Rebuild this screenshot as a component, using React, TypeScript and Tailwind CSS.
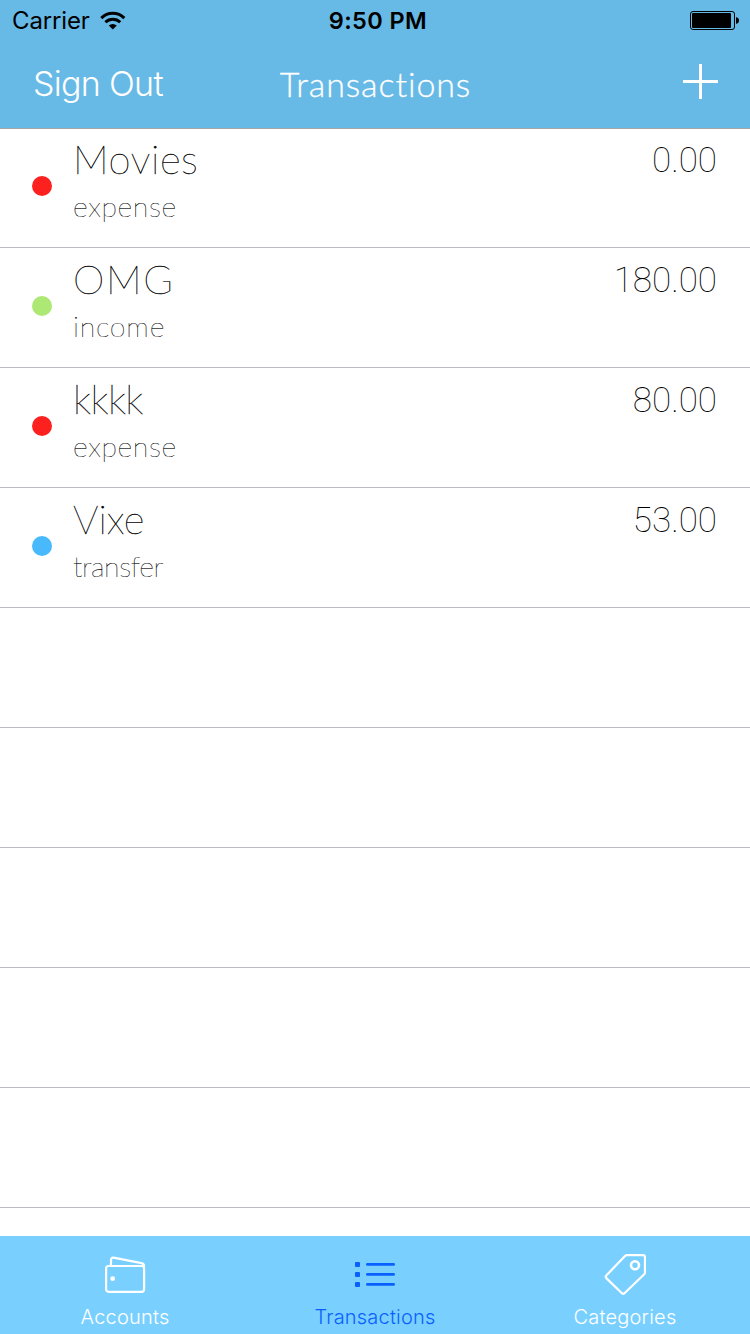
type Kind = "expense" | "income" | "transfer";

interface Transaction {
  name: string;
  kind: Kind;
  amount: string;
  tracking: string;
}

const transactions: Transaction[] = [
  { name: "Movies", kind: "expense", amount: "0.00", tracking: "tracking-[0.6px]" },
  { name: "OMG", kind: "income", amount: "180.00", tracking: "tracking-[1.6px]" },
  { name: "kkkk", kind: "expense", amount: "80.00", tracking: "tracking-[-0.5px]" },
  { name: "Vixe", kind: "transfer", amount: "53.00", tracking: "tracking-[0px]" },
];

const dotColor: Record<Kind, string> = {
  expense: "bg-[#fc201f]",
  income: "bg-[#ace873]",
  transfer: "bg-[#47b9fc]",
};

const kindTracking: Record<Kind, string> = {
  expense: "tracking-[0.6px]",
  income: "tracking-[0.8px]",
  transfer: "tracking-[-0.4px]",
};

function WifiIcon() {
  return (
    <svg width="26" height="20" viewBox="0 0 26 20" fill="none" stroke="#000" strokeWidth="3">
      <path d="M1.3 7.1a16.2 16.2 0 0 1 23 0" />
      <path d="M5.4 11.2a10.5 10.5 0 0 1 14.8 0" />
      <path d="M12.8 18.6l-4-4.1a5.8 5.8 0 0 1 8 0z" fill="#000" stroke="none" />
    </svg>
  );
}

function BatteryIcon() {
  return (
    <svg width="50" height="20" viewBox="0 0 50 20">
      <rect x="0.5" y="0.5" width="44" height="18" rx="2.5" fill="none" stroke="#000" />
      <rect x="2" y="2" width="39" height="15" rx="1" />
      <path d="M46 6.2c2 .2 3 1.600 3 3.300s-1 3.100-3 3.300z" />
    </svg>
  );
}

function StatusBar() {
  return (
    <div className="grid h-10 grid-cols-3 items-center pt-0.5 pr-2.5 pl-3 font-['Inter',sans-serif] text-black">
      <div className="flex items-center gap-2.5">
        <span className="text-[24px] leading-9 tracking-[-0.15px]">Carrier</span>
        <WifiIcon />
      </div>
      <span className="pl-1 text-center text-[23.500px] leading-9 font-semibold tracking-[0.4px]">9:50 PM</span>
      <div className="flex justify-end">
        <BatteryIcon />
      </div>
    </div>
  );
}

function NavBar() {
  return (
    <div className="grid h-[88px] grid-cols-3 items-center pr-8 pl-[33px] text-white">
      <button className="text-left font-['Inter',sans-serif] text-[34px] leading-10 font-[350] tracking-[-0.7px] whitespace-nowrap">
        Sign Out
      </button>
      <h1 className="text-center font-['Lato',sans-serif] text-[34px] leading-10 font-light tracking-[0.9px] [-webkit-text-stroke:0.3px_#fff]">
        Transactions
      </h1>
      <button aria-label="Add" className="flex justify-end pb-1.5">
        <svg width="35" height="35" viewBox="0 0 35 35" stroke="#fff" strokeWidth="3">
          <path d="M0 17.500h35M17.500 0v35" />
        </svg>
      </button>
    </div>
  );
}

function Row({ item }: { item?: Transaction }) {
  return (
    <li className="flex h-[120px] shrink-0 border-b border-[#bcbbc1] pr-[33px] pl-8">
      {item && (
        <>
          <span className={`mt-12 size-5 shrink-0 rounded-full ${dotColor[item.kind]}`} />
          <div className="ml-[21px] flex flex-1 flex-col gap-[5px] pt-[7px] font-['Lato',sans-serif] font-thin text-black">
            <span className={`text-[40px] leading-12 [-webkit-text-stroke:0.35px_#000] ${item.tracking}`}>
              {item.name}
            </span>
            <span className={`text-[28.500px] leading-9 [-webkit-text-stroke:0.2px_#000] ${kindTracking[item.kind]}`}>
              {item.kind}
            </span>
          </div>
          <span className="pt-[9px] font-['Roboto',sans-serif] text-[35px] leading-12 font-thin text-black">
            {item.amount}
          </span>
        </>
      )}
    </li>
  );
}

function WalletIcon() {
  return (
    <svg width="42" height="42" viewBox="0 -1 42 42" fill="none" stroke="#fff" strokeWidth="2.200" strokeLinejoin="round">
      <rect x="2.100" y="11" width="38" height="25.800" rx="2.500" />
      <path d="M7 11V5c0-1.800 1-2.600 2.600-2.300L37.500 8.200c2 .4 2.600 1.200 2.600 3.300" />
      <circle cx="8.600" cy="23.700" r="2.400" fill="#fff" stroke="none" />
    </svg>
  );
}

function ListIcon() {
  return (
    <svg width="42" height="42" viewBox="0 -2 42 42" fill="#0a60ff">
      {[6, 16, 26].map((y) => (
        <g key={y}>
          <rect x="1" y={y} width="5" height="5" rx="1" />
          <rect x="12" y={y + 1} width="29" height="2.800" rx="1.400" />
        </g>
      ))}
    </svg>
  );
}

function TagIcon() {
  return (
    <svg width="42" height="42" viewBox="-0.5 0.3 42 42" fill="none" stroke="#fff" strokeWidth="2.200" strokeLinejoin="round">
      <path d="M22.500 1.500H38.500a2 2 0 0 1 2 2V18.500a3 3 0 0 1-.8 2L20 39.500a2 2 0 0 1-2.600 0L1.800 24.400a2 2 0 0 1 0-2.600L20.500 2.300a3 3 0 0 1 2-.8z" />
      <circle cx="30.500" cy="11.500" r="4" strokeWidth="2.600" />
    </svg>
  );
}

function TabBar() {
  const tabs = [
    { label: "Accounts", icon: <WalletIcon />, color: "text-white" },
    { label: "Transactions", icon: <ListIcon />, color: "text-[#0a60ff]" },
    { label: "Categories", icon: <TagIcon />, color: "text-white" },
  ];
  return (
    <nav className="grid h-[98px] shrink-0 grid-cols-3 bg-[#79d0ff]">
      {tabs.map((tab) => (
        <button key={tab.label} className={`flex flex-col items-center pt-[18px] ${tab.color}`}>
          {tab.icon}
          <span className="mt-[9px] font-['Inter',sans-serif] text-[20px] leading-6 font-[350] tracking-[0.2px]">
            {tab.label}
          </span>
        </button>
      ))}
    </nav>
  );
}

export default function App() {
  return (
    <div className="flex h-[1334px] w-[750px] flex-col overflow-hidden bg-white antialiased">
      <header className="shrink-0 bg-[#67b9e6] shadow-[0_1px_0_#a5a5a8]">
        <StatusBar />
        <NavBar />
      </header>
      <ul className="flex flex-1 flex-col overflow-hidden">
        {Array.from({ length: 9 }, (_, i) => (
          <Row key={i} item={transactions[i]} />
        ))}
      </ul>
      <TabBar />
    </div>
  );
}
